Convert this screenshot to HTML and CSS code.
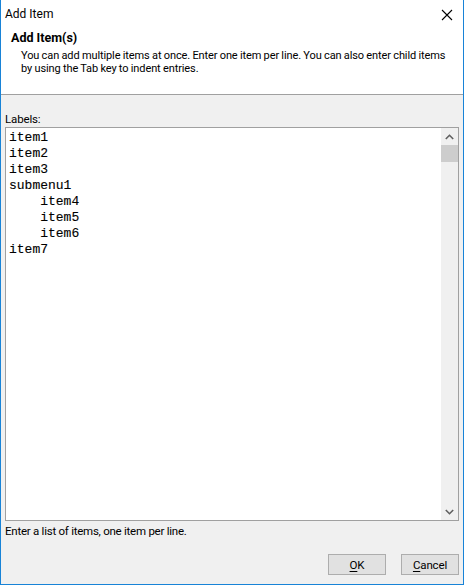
FILE: index.html
```html
<!DOCTYPE html>
<html>
<head>
<meta charset="utf-8">
<link rel="stylesheet" href="styles.css">
</head>
<body>
<div class="window">
  <div class="titlebar">
    <span class="title">Add Item</span>
    <svg class="close" width="12" height="12" viewBox="0 0 12 12"><path d="M1 1 L11 11 M11 1 L1 11" stroke="#000" stroke-width="1.1" fill="none"/></svg>
  </div>
  <div class="header">
    <div class="h-title">Add Item(s)</div>
    <div class="h-desc">You can add multiple items at once. Enter one item per line. You can also enter child items by using the Tab key to indent entries.</div>
  </div>
  <div class="content">
    <div class="label">Labels:</div>
    <div class="textbox">
      <pre class="text">item1
item2
item3
submenu1
	item4
	item5
	item6
item7</pre>
      <div class="scrollbar">
        <div class="arrow">
          <svg width="9" height="6" viewBox="0 0 9 6"><path d="M0.8 5 L4.5 1.3 L8.2 5" stroke="#606060" stroke-width="1.6" fill="none"/></svg>
        </div>
        <div class="thumb"></div>
        <div class="track"></div>
        <div class="arrow">
          <svg width="9" height="6" viewBox="0 0 9 6"><path d="M0.8 1 L4.5 4.7 L8.2 1" stroke="#606060" stroke-width="1.6" fill="none"/></svg>
        </div>
      </div>
    </div>
    <div class="hint">Enter a list of items, one item per line.</div>
    <div class="buttons">
      <button class="btn"><u>O</u>K</button>
      <button class="btn"><u>C</u>ancel</button>
    </div>
  </div>
</div>
</body>
</html>
```

FILE: styles.css
```css
* { box-sizing: border-box; }
html, body { margin: 0; padding: 0; }
body {
  width: 464px;
  height: 585px;
  font-family: Roboto, "Noto Sans", sans-serif;
  font-size: 11.5px;
  letter-spacing: -0.15px;
  color: #000;
}
.window {
  width: 464px;
  height: 585px;
  border: 1px solid #1883d7;
  border-top: none;
  display: flex;
  flex-direction: column;
  background: #f0f0f0;
}
.titlebar {
  height: 30px;
  background: #fff;
  display: flex;
  align-items: center;
  justify-content: space-between;
  padding: 0 10px 2px 4px;
}
.title { font-size: 12px; line-height: 16px; letter-spacing: 0; }
.close { display: block; margin-top: 2px; }
.header {
  height: 65px;
  background: #fff;
  border-bottom: 1px solid #a0a0a0;
  padding: 0 0 0 10px;
}
.h-title {
  font-weight: bold;
  font-size: 12.5px;
  letter-spacing: 0;
  line-height: 16px;
}
.h-desc {
  padding-left: 10px;
  padding-right: 10px;
  line-height: 13px;
  margin-top: 3px;
  font-size: 11px;
  letter-spacing: -0.1px;
  word-spacing: -0.3px;
}
.content {
  flex: 1;
  display: flex;
  flex-direction: column;
  padding: 0 4px 0 4px;
}
.label {
  margin-top: 16px;
  line-height: 16px;
}
.textbox {
  height: 394px;
  border: 1px solid #a0a0a0;
  background: #fff;
  display: flex;
}
.text {
  flex: 1;
  margin: 0;
  padding: 2px 3px;
  font-family: "Liberation Mono", monospace;
  font-size: 13px;
  letter-spacing: 0;
  line-height: 16px;
  tab-size: 4;
  color: #000;
  -webkit-text-stroke: 0.12px #000;
}
.scrollbar {
  width: 17px;
  background: #f0f0f0;
  display: flex;
  flex-direction: column;
}
.arrow {
  height: 17px;
  display: flex;
  align-items: center;
  justify-content: center;
}
.thumb {
  height: 17px;
  background: #cdcdcd;
}
.track { flex: 1; }
.hint {
  margin-top: 2px;
  line-height: 16px;
  letter-spacing: -0.25px;
}
.buttons {
  margin-top: 15px;
  display: flex;
  justify-content: flex-end;
  gap: 15px;
}
.btn {
  width: 58px;
  height: 21px;
  border: 1px solid #adadad;
  background: #e1e1e1;
  font-family: Roboto, "Noto Sans", sans-serif;
  font-size: 11.5px;
  letter-spacing: -0.15px;
  padding: 0;
  color: #000;
}
.btn u { text-decoration-thickness: 1px; text-underline-offset: 2px; }
```
